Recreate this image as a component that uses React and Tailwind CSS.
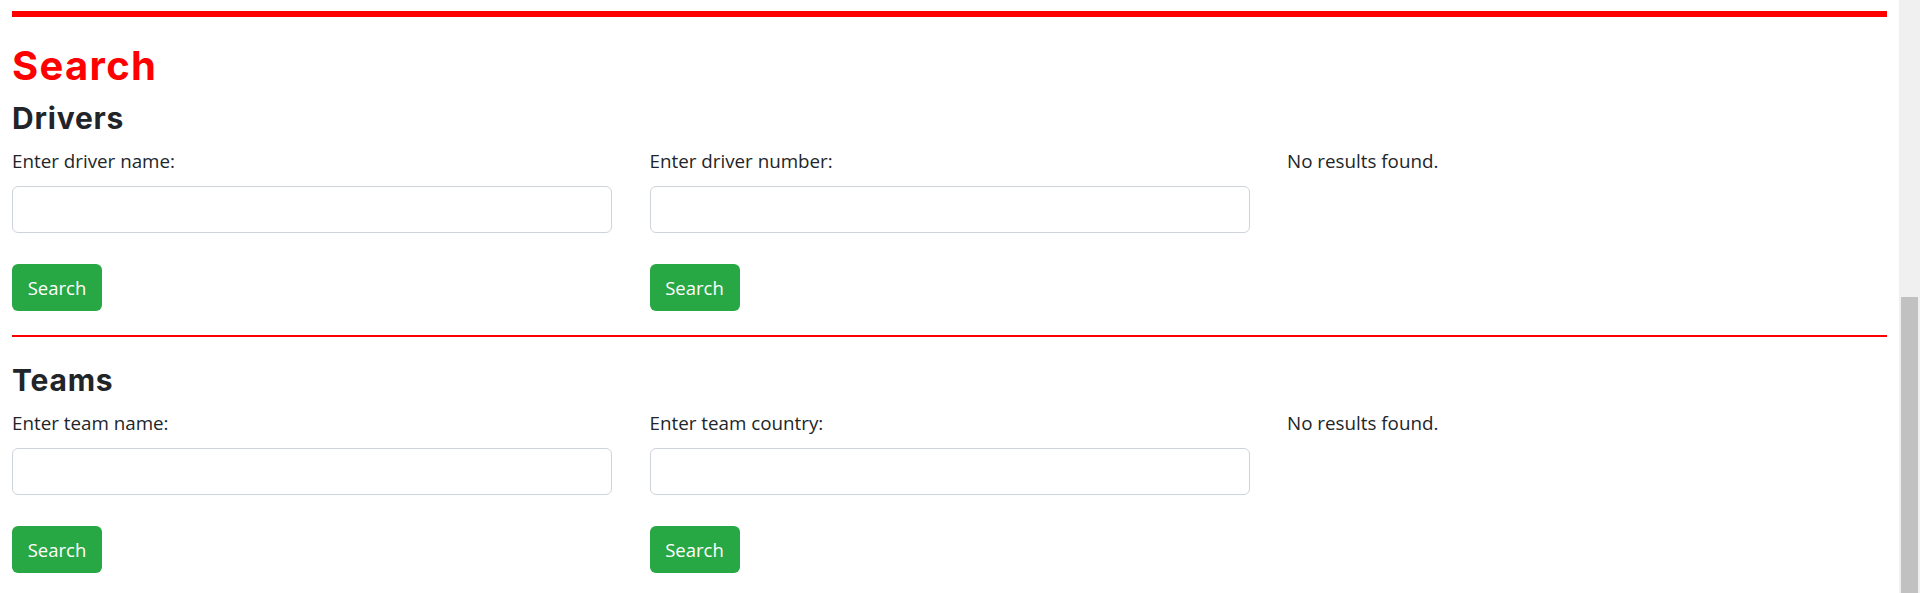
import React from 'react';

const bodyFont = { fontFamily: '"Open Sans", "Noto Sans", sans-serif' };

const SearchField = ({ label }) => (
  <div className="flex flex-col">
    <label className="text-[18.8px] leading-[27px] text-[#212529]">{label}</label>
    <input
      type="text"
      className="mt-[11px] h-[47px] w-full rounded-[6px] border border-[#ced4da] bg-white px-3 outline-none"
    />
    <button className="mt-[31px] h-[47px] w-[90px] rounded-[6px] bg-[#28a745] text-[18.5px] text-white">
      Search
    </button>
  </div>
);

const SearchSection = ({ title, fields }) => (
  <section>
    <h3 className="font-['Inter',sans-serif] text-[30px] leading-[36px] font-bold text-[#212529] tracking-[0.8px]">
      {title}
    </h3>
    <div className="mt-[12px] grid grid-cols-3 gap-x-[37.5px]">
      {fields.map((f) => (
        <SearchField key={f} label={f} />
      ))}
      <p className="text-[18.8px] leading-[27px] text-[#212529]">No results found.</p>
    </div>
  </section>
);

export default function App() {
  return (
    <div className="flex h-[593px] w-[1920px] overflow-hidden bg-white" style={bodyFont}>
      <main className="flex-1 px-3 pt-[11px]">
        <div className="h-[6px] bg-[#ff0000]" />

        <h1 className="mt-[25px] font-['Inter',sans-serif] text-[40px] leading-[48px] font-bold tracking-[1.3px] text-[#ff0000]">
          Search
        </h1>

        <div className="mt-[10px]">
          <SearchSection title="Drivers" fields={['Enter driver name:', 'Enter driver number:']} />
        </div>

        <div className="mt-[24px] h-[2px] bg-[#ff0000]" />

        <div className="mt-[25px]">
          <SearchSection title="Teams" fields={['Enter team name:', 'Enter team country:']} />
        </div>
      </main>

      {/* window scrollbar */}
      <aside className="flex w-[21px] flex-col bg-[#f0f0f0] px-[2px] pt-[297px]">
        <div className="flex-1 bg-[#c1c1c1]" />
      </aside>
    </div>
  );
}
